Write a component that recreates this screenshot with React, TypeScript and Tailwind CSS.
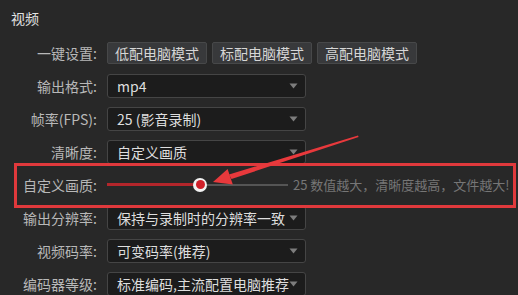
import React from "react";

const font = { fontFamily: '"Noto Sans CJK SC", "Noto Sans", sans-serif' };

function Caret() {
  return (
    <svg width="9" height="6" viewBox="0 0 9 6" className="shrink-0">
      <path d="M0.5 0.5 L8.5 0.5 L4.5 5.5 Z" fill="#7d7d7d" />
    </svg>
  );
}

function Select({ value }: { value: string }) {
  return (
    <div className="flex h-[24px] w-[199px] items-center justify-between rounded-[3px] border border-[#454545] bg-[#1c1c1c] pl-[9px] pr-[7px]">
      <span className="whitespace-nowrap text-[14px] leading-none text-[#dedede]">{value}</span>
      <Caret />
    </div>
  );
}

function Row({ label, children }: { label: string; children: React.ReactNode }) {
  return (
    <div className="flex h-[33px] items-center gap-[10px]">
      <div className="w-[97px] shrink-0 whitespace-nowrap text-right text-[14px] leading-none text-[#b8b8b8]">{label}</div>
      {children}
    </div>
  );
}

function Btn({ text }: { text: string }) {
  return (
    <div className="flex h-[22px] w-[100px] items-center justify-center rounded-[2px] border border-[#474849] bg-[#38393b] text-[14px] leading-none text-[#d6d6d6]">
      {text}
    </div>
  );
}

export default function App() {
  return (
    <div className="relative h-[295px] w-[518px] overflow-hidden bg-[#282828]" style={font}>
      <div className="flex h-[36px] items-center pl-[11px] text-[14px] text-[#e2e2e2]">视频</div>
      <Row label="一键设置:">
        <div className="flex gap-[5px]">
          <Btn text="低配电脑模式" />
          <Btn text="标配电脑模式" />
          <Btn text="高配电脑模式" />
        </div>
      </Row>
      <Row label="输出格式:">
        <Select value="mp4" />
      </Row>
      <Row label="帧率(FPS):">
        <Select value="25 (影音录制)" />
      </Row>
      <Row label="清晰度:">
        <Select value="自定义画质" />
      </Row>
      <Row label="自定义画质:">
        <div className="flex items-center">
          <div className="relative flex h-[14px] w-[181px] items-center">
            <div className="h-[3px] w-[93px] bg-[#b3262b]" />
            <div className="h-[2px] flex-1 bg-[#555555]" />
            <div className="absolute left-[86px] top-0 flex h-[14px] w-[14px] items-center justify-center rounded-full bg-[#f2f2f2]">
              <div className="h-[9px] w-[9px] rounded-full bg-[#d0202a]" />
            </div>
          </div>
          <span className="ml-[5px] whitespace-nowrap text-[13px] leading-none text-[#767676]">25 数值越大，清晰度越高，文件越大!</span>
        </div>
      </Row>
      <Row label="输出分辨率:">
        <Select value="保持与录制时的分辨率一致" />
      </Row>
      <Row label="视频码率:">
        <Select value="可变码率(推荐)" />
      </Row>
      <Row label="编码器等级:">
        <Select value="标准编码,主流配置电脑推荐" />
      </Row>

      <div className="pointer-events-none absolute left-[14px] top-[163px] h-[45px] w-[502px] border-[3px] border-[#e0393c]" />
      <svg className="pointer-events-none absolute left-0 top-0" width="518" height="295" viewBox="0 0 518 295">
        <polygon points="358,135.5 358.6,137 231.5,179 229,174.5" fill="#e8393c" />
        <polygon points="213,182 227.6,169 232.8,184.4" fill="#e8393c" />
      </svg>
    </div>
  );
}
